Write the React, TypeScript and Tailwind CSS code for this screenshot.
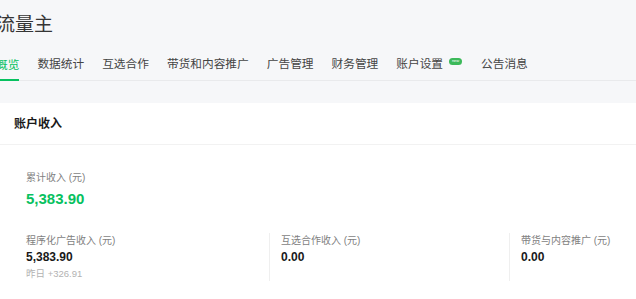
const tabs = ['概览', '数据统计', '互选合作', '带货和内容推广', '广告管理', '财务管理', '账户设置', '公告消息'];

const stats = [
  { label: '程序化广告收入 (元)', value: '5,383.90', sub: '昨日 +326.91' },
  { label: '互选合作收入 (元)', value: '0.00' },
  { label: '带货与内容推广 (元)', value: '0.00' },
];

export default function App() {
  return (
    <div
      className="h-screen overflow-hidden bg-[#f6f7f9] text-[#353535]"
      style={{ fontFamily: '"Liberation Sans", "Noto Sans CJK SC", sans-serif' }}
    >
      <div className="ml-[-4px]">
        <h1 className="pt-[12px] text-[19px] leading-[26px]">流量主</h1>
        <nav className="mt-[13px] flex gap-[18px] border-b border-[#e9eaec] text-[11.7px] text-[#444]">
          {tabs.map((t, i) => (
            <div
              key={t}
              className={
                i === 0
                  ? 'mb-[-1px] flex items-center border-b-2 border-[#07c160] pb-[4px] pt-[3px] leading-[20px] text-[#07c160]'
                  : 'flex items-center pb-[6px] pt-[3px] leading-[20px]'
              }
            >
              {t}
              {t === '账户设置' && (
                <span className="mb-[6px] ml-[6px] mr-[1px] inline-flex h-[7px] w-[13px] items-center justify-center rounded-full bg-[#3cb95a] text-[4px] leading-none text-white">
                  new
                </span>
              )}
            </div>
          ))}
        </nav>
      </div>

      {/* account income card */}
      <div className="mt-[22px] bg-white">
        <div className="flex h-[42px] items-center border-b border-[#f2f2f2] px-[14px] text-[12px] font-bold text-[#191919]">
          账户收入
        </div>
        <div className="px-[26px] pt-[26px]">
          <div className="text-[10px] leading-[14px] text-[#7f7f7f]">累计收入 (元)</div>
          <div className="mt-[4px] text-[15px] font-semibold leading-[20px] text-[#07c160]">5,383.90</div>
          <div className="mt-[24px] grid grid-cols-[243px_240px_1fr]">
            {stats.map((s, i) => (
              <div
                key={s.label}
                className={i === 0 ? 'h-[48px] pt-[1px]' : 'h-[48px] border-l border-[#efefef] pl-[11px] pt-[1px]'}
              >
                <div className="whitespace-nowrap text-[10px] leading-[14px] text-[#7f7f7f]">{s.label}</div>
                <div className="mt-[1px] text-[12px] font-semibold leading-[16px] text-[#191919]">{s.value}</div>
                {s.sub && <div className="mt-[2px] whitespace-nowrap text-[9.5px] leading-[14px] text-[#b2b2b2]">{s.sub}</div>}
              </div>
            ))}
          </div>
          <div className="h-[40px]" />
        </div>
      </div>
    </div>
  );
}
